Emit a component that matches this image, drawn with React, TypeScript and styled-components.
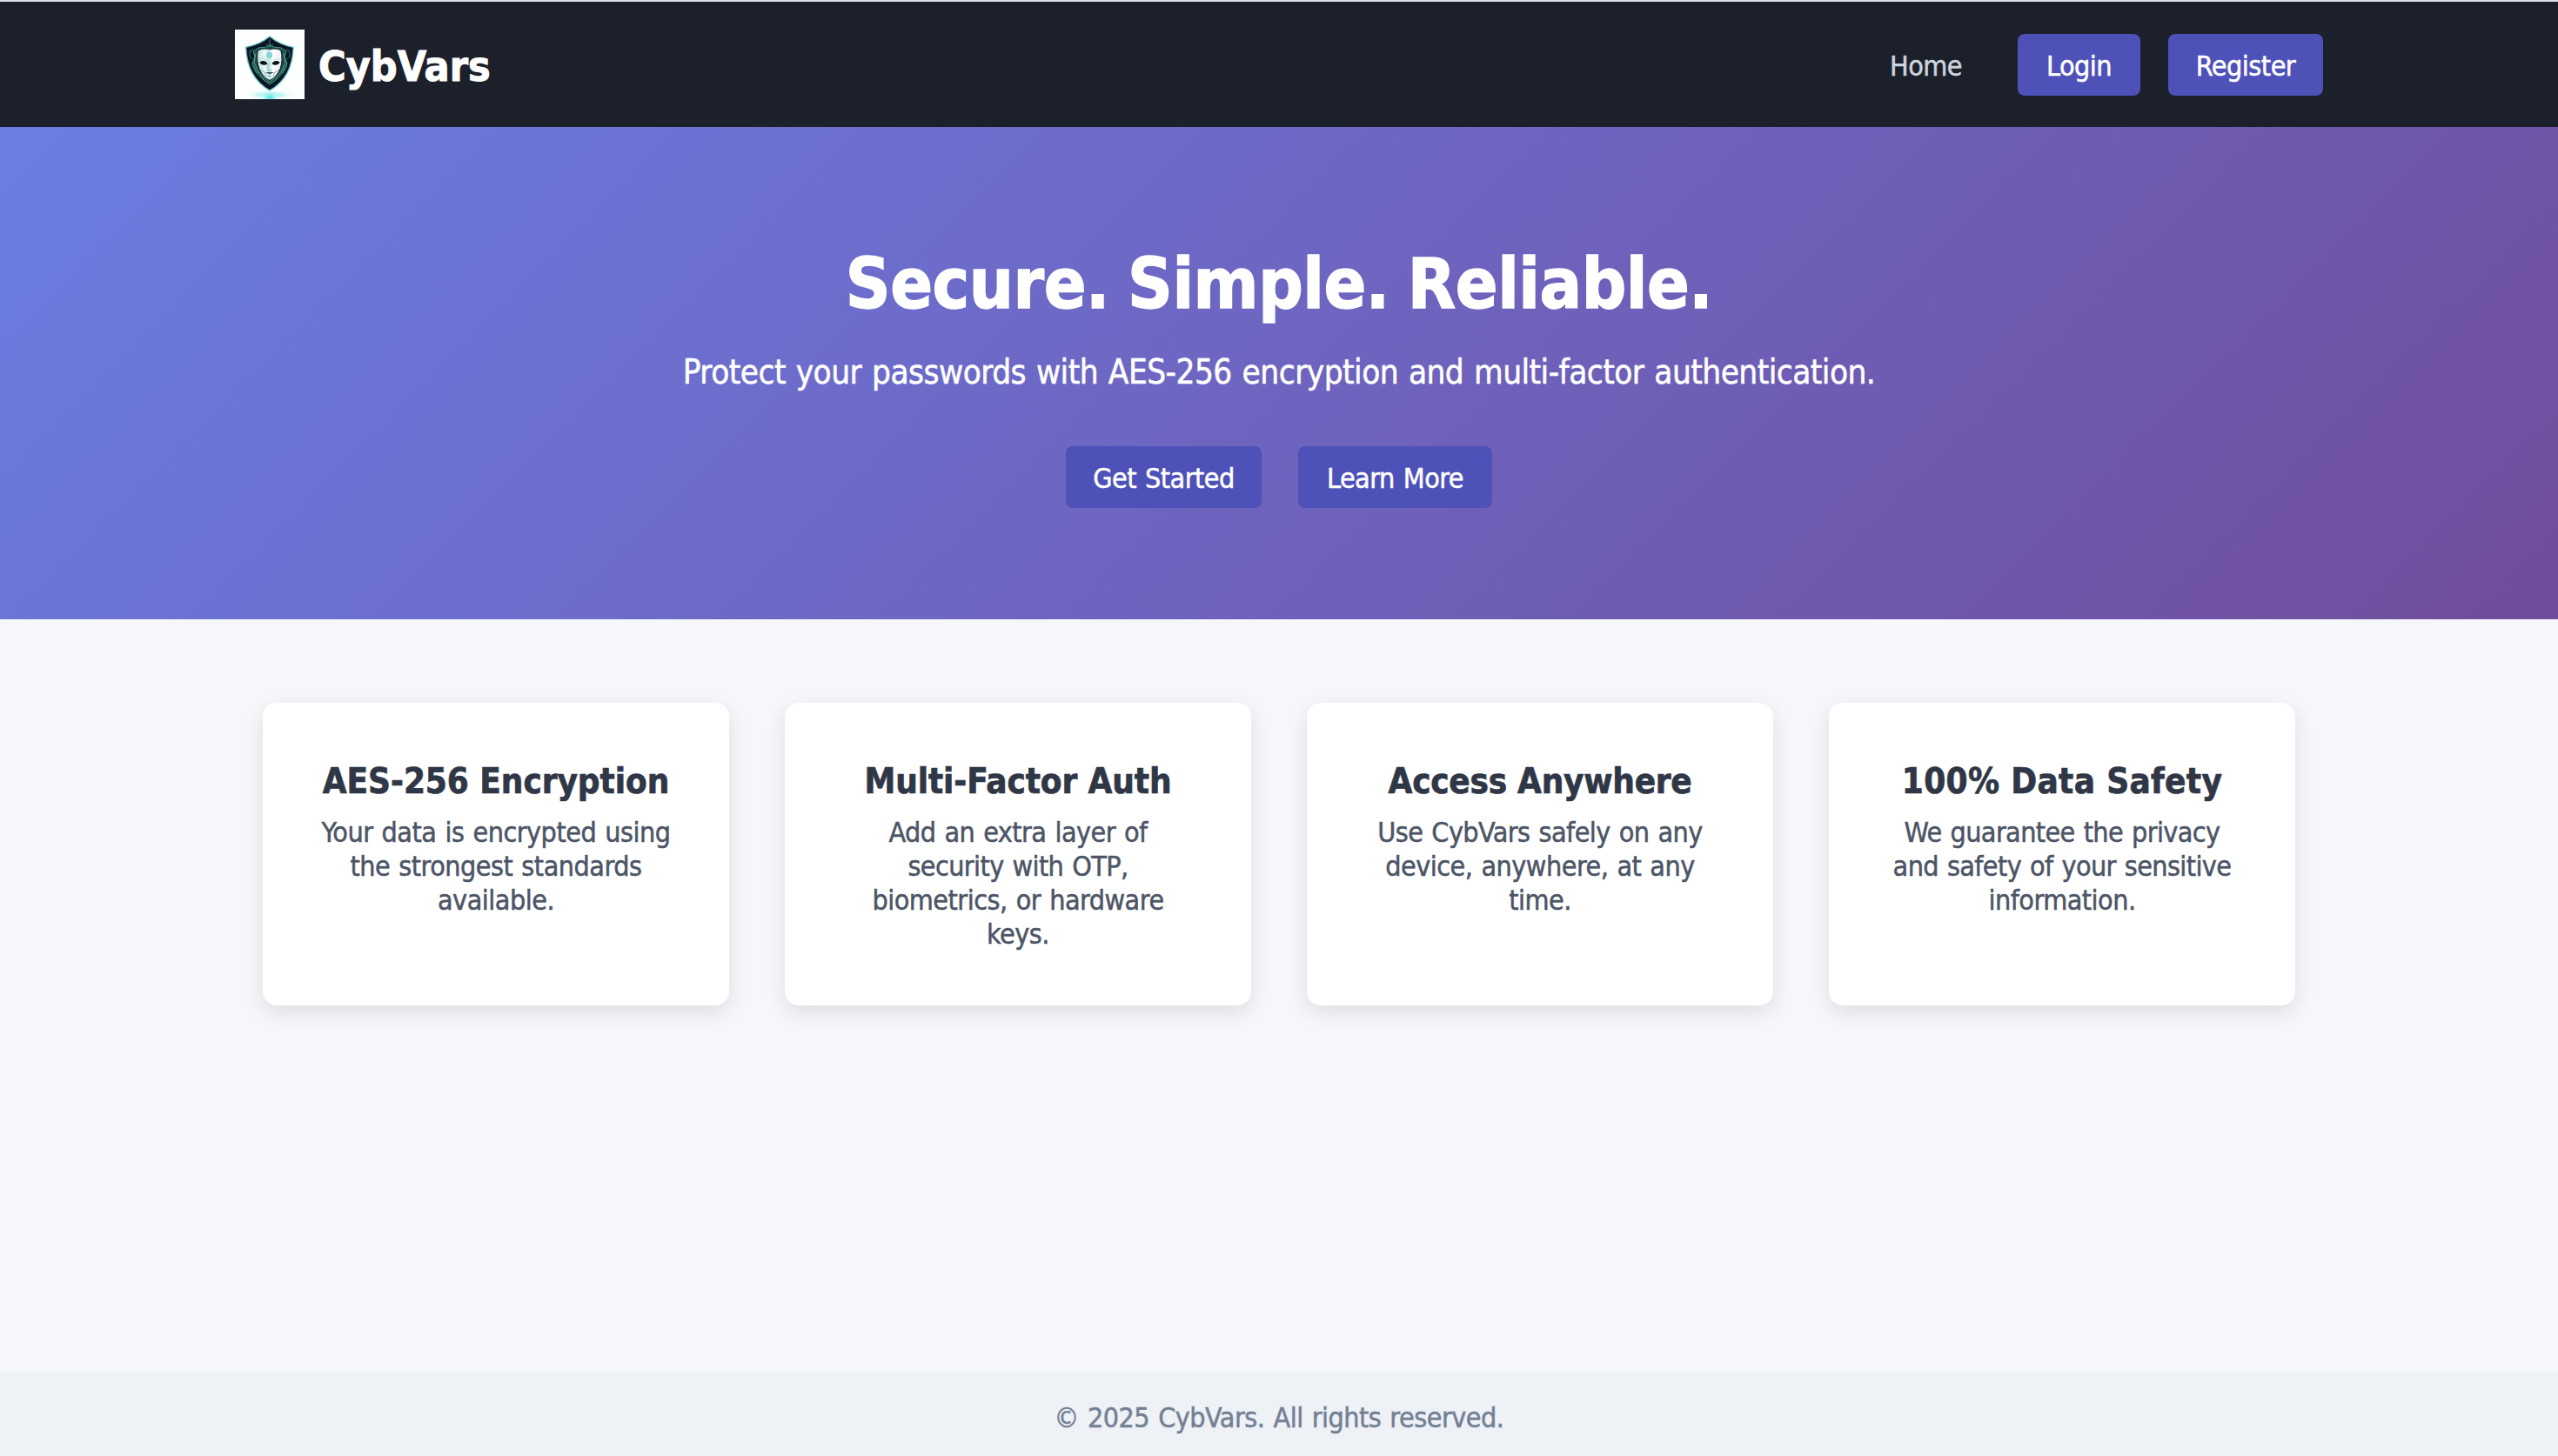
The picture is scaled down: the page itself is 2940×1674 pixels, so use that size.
import React from 'react';
import styled, { createGlobalStyle } from 'styled-components';

const GlobalStyle = createGlobalStyle`
  * { box-sizing: border-box; margin: 0; padding: 0; }
  body {
    background: #f5f7fb;
    color: #2f3746;
    font-family: Tahoma, 'DejaVu Sans Condensed', 'DejaVu Sans', sans-serif;
    font-stretch: condensed;
    font-size: 32px;
    line-height: 39px;
    letter-spacing: -0.5px;
    word-spacing: 1.4px;
    -webkit-text-stroke: 0.5px;
  }
`;

const Page = styled.div`
  display: flex;
  flex-direction: column;
  height: 1674px;
  overflow: hidden;
  border-top: 2px solid #dee1e8;
`;

const Header = styled.header`
  display: flex;
  justify-content: space-between;
  align-items: center;
  height: 144px;
  flex: none;
  padding: 0 270px;
  background: #1c202a;
`;

const Brand = styled.div`
  display: flex;
  align-items: center;
  gap: 16px;
`;

const BrandName = styled.span`
  padding-top: 4px;
  color: #fff;
  font-size: 48px;
  font-weight: 700;
  line-height: 58px;
  letter-spacing: 0;
  -webkit-text-stroke: 1px;
`;

const Logo = styled.svg`
  display: block;
  width: 80px;
  height: 80px;
`;

const Nav = styled.nav`
  display: flex;
  align-items: center;
  gap: 32px;
  padding-top: 1px;
`;

const NavLink = styled.a`
  width: 83px;
  margin-right: 32px;
  padding-top: 3px;
  color: #cdd5df;
  white-space: nowrap;
`;

const Button = styled.a<{ $width: number }>`
  display: flex;
  justify-content: center;
  width: ${(p) => p.$width}px;
  height: 71px;
  padding: 17.5px 0 0;
  border-radius: 8px;
  background: #4d51b8;
  color: #fff;
  white-space: nowrap;
`;

const Hero = styled.section`
  display: flex;
  flex-direction: column;
  align-items: center;
  flex: none;
  height: 566px;
  padding-top: 132px;
  background: linear-gradient(135deg, #6b7de3 0%, #704d9d 100%);
  color: #fff;
`;

const Title = styled.h1`
  margin-bottom: 30px;
  font-size: 80px;
  line-height: 97px;
  letter-spacing: -0.45px;
  word-spacing: -3.5px;
  white-space: nowrap;
  -webkit-text-stroke: 1.4px;
`;

const Lead = styled.p`
  margin-bottom: 62px;
  font-size: 38.4px;
  line-height: 46px;
  letter-spacing: -0.54px;
  white-space: nowrap;
`;

const Actions = styled.div`
  display: flex;
  gap: 42px;
`;

const Features = styled.main`
  display: grid;
  grid-template-columns: repeat(4, 536px);
  gap: 64px;
  justify-content: center;
  align-content: start;
  flex: 1;
  padding-top: 96px;
`;

const Card = styled.article`
  height: 348px;
  padding: 66px 0 0;
  border-radius: 16px;
  background: #fff;
  box-shadow: 0 8px 24px rgba(0, 0, 0, 0.1);
  text-align: center;
`;

const CardTitle = styled.h3<{ $track: number }>`
  margin-bottom: 15.5px;
  font-size: 40px;
  line-height: 48px;
  letter-spacing: ${(p) => p.$track}px;
  word-spacing: 0;
  white-space: nowrap;
  -webkit-text-stroke: 0.7px;
`;

const CardLine = styled.span<{ $track: number }>`
  display: block;
  color: #4c5566;
  letter-spacing: ${(p) => p.$track}px;
  white-space: nowrap;
`;

const Footer = styled.footer`
  flex: none;
  height: 97px;
  padding-top: 33.5px;
  background: #eef1f6;
  color: #748094;
  text-align: center;
`;

type Line = [text: string, track: number];

const features: { title: Line; lines: Line[] }[] = [
  {
    title: ['AES-256 Encryption', -0.05],
    lines: [['Your data is encrypted using', -0.5], ['the strongest standards', -0.5], ['available.', -0.5]],
  },
  {
    title: ['Multi-Factor Auth', -0.1],
    lines: [
      ['Add an extra layer of', -0.55],
      ['security with OTP,', -0.6],
      ['biometrics, or hardware', -0.5],
      ['keys.', -0.5],
    ],
  },
  {
    title: ['Access Anywhere', -0.25],
    lines: [['Use CybVars safely on any', -0.55], ['device, anywhere, at any', -0.5], ['time.', -0.5]],
  },
  {
    title: ['100% Data Safety', 0.35],
    lines: [['We guarantee the privacy', -0.6], ['and safety of your sensitive', -0.6], ['information.', -0.5]],
  },
];

const ShieldLogo = () => (
  <Logo viewBox="0 0 80 80" role="img" aria-label="CybVars">
    <defs>
      <radialGradient id="pool" cx="0.5" cy="0.5" r="0.5">
        <stop offset="0" stopColor="#4ee6e4" />
        <stop offset="0.45" stopColor="#a4f1ef" stopOpacity="0.85" />
        <stop offset="1" stopColor="#fff" stopOpacity="0" />
      </radialGradient>
      <linearGradient id="face" x1="0" y1="0" x2="1" y2="0">
        <stop offset="0" stopColor="#b4dfda" />
        <stop offset="0.3" stopColor="#f2f8f8" />
        <stop offset="0.5" stopColor="#b4e4e1" />
        <stop offset="0.62" stopColor="#ffffff" />
        <stop offset="1" stopColor="#e8f0f1" />
      </linearGradient>
      <linearGradient id="rim" x1="0" y1="0" x2="1" y2="1">
        <stop offset="0" stopColor="#3f9c98" />
        <stop offset="0.5" stopColor="#74d6d2" />
        <stop offset="1" stopColor="#54c5cc" />
      </linearGradient>
    </defs>
    <rect width="80" height="80" fill="#fdfefe" />
    <ellipse cx="40" cy="75" rx="31" ry="6" fill="url(#pool)" opacity="0.75" />
    <ellipse cx="40" cy="78" rx="12" ry="9" fill="url(#pool)" />
    <path
      d="M40 8C32 14.5 23 18.5 12.8 20.4C13.6 43 22.5 60 40 70C57.5 60 66.4 43 67.2 20.4C57 18.5 48 14.5 40 8Z"
      fill="#0b1524"
      stroke="url(#rim)"
      strokeWidth="1.3"
    />
    <path
      d="M40 17L44 20L53 21L59 25L57 31L60 39L54 51L47 58L40 63L33 58L26 51L20 39L23 31L21 25L27 21L36 20Z"
      fill="#1b4c47"
      stroke="#4a9a88"
      strokeWidth="1"
    />
    <path
      d="M17 25L21 23M17 25V31L20 34M63 25L59 23M63 25V31L60 34M20 41L24 49L34 58M60 41L56 49L46 58M40 11V19M36 17L40 20L44 17"
      fill="none"
      stroke="#397d72"
      strokeWidth="1"
    />
    <path d="M24 27L22 38L27 49L40 60.5L53 49L58 38L56 27" fill="none" stroke="#62b49b" strokeWidth="0.8" />
    <path
      d="M26.2 24.5C30 21.5 35 22 40 22.5C45 22 50 21.5 53 24.5C54.6 31 54.3 39 52 45C49.5 51 45 56 40 58.5C34.5 56 30.5 51 28 45C25.5 39 25 31 26.2 24.500Z"
      fill="url(#face)"
      stroke="#07111d"
      strokeWidth="0.9"
    />
    <path d="M28.5 38C30.5 35 36 35.500 37.5 39.500C34 41.500 30.5 41 28.5 38Z" fill="#081018" />
    <path d="M51.5 38C49.5 35 44 35.500 42.5 39.500C46 41.500 49.5 41 51.5 38Z" fill="#081018" />
    <path d="M28 34.5C31 33 35 33.5 37.5 36M52 34.5C49 33 45 33.5 42.5 36" fill="none" stroke="#afcfd0" strokeWidth="0.8" />
    <path d="M38.5 39L37.5 46L40 47.5L42.5 46" fill="none" stroke="#80bdbc" strokeWidth="0.9" />
    <path d="M35 49.5L39 49L40 49.6L41 49L45 49.5L40 51Z" fill="#1d3a42" />
    <path d="M28 45L34 49L36 54M52 45L46 49L44 54M38 53.5H42" fill="none" stroke="#7d9fa1" strokeWidth="0.9" />
    <circle cx="39.7" cy="29.5" r="2.8" fill="#bde7ea" stroke="#52b9c4" strokeWidth="0.9" />
    <path d="M39.7 26V33M36.500 27.700L43 31.300M43 27.700L36.500 31.300" stroke="#64c0ca" strokeWidth="0.6" />
  </Logo>
);

export default function App() {
  return (
    <>
      <GlobalStyle />
      <Page>
        <Header>
          <Brand>
            <ShieldLogo />
            <BrandName>CybVars</BrandName>
          </Brand>
          <Nav>
            <NavLink>Home</NavLink>
            <Button $width={141}>Login</Button>
            <Button $width={178}>Register</Button>
          </Nav>
        </Header>
        <Hero>
          <Title>Secure. Simple. Reliable.</Title>
          <Lead>Protect your passwords with AES-256 encryption and multi-factor authentication.</Lead>
          <Actions>
            <Button $width={225}>Get Started</Button>
            <Button $width={223}>Learn More</Button>
          </Actions>
        </Hero>
        <Features>
          {features.map(({ title, lines }) => (
            <Card key={title[0]}>
              <CardTitle $track={title[1]}>{title[0]}</CardTitle>
              <p>
                {lines.map(([text, track]) => (
                  <CardLine key={text} $track={track}>
                    {text}
                  </CardLine>
                ))}
              </p>
            </Card>
          ))}
        </Features>
        <Footer>© 2025 CybVars. All rights reserved.</Footer>
      </Page>
    </>
  );
}
